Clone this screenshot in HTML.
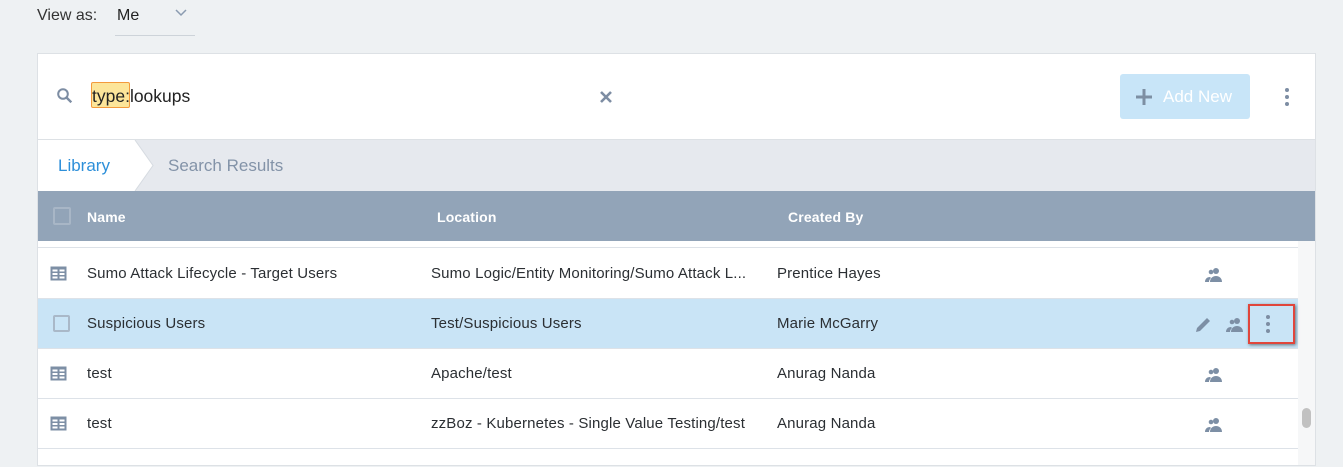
<!DOCTYPE html>
<html><head><meta charset="utf-8">
<style>
*{box-sizing:border-box;margin:0;padding:0}
body{width:1343px;height:467px;background:#eef1f3;font-family:"Liberation Sans",sans-serif;position:relative;overflow:hidden;color:#2b2f33}
.abs{position:absolute}
.t{font-size:15px;white-space:nowrap;letter-spacing:0.15px}
</style></head><body>
<div class="abs" style="left:37px;top:7px;font-size:16px;color:#333">View as:</div>
<div class="abs" style="left:117px;top:7px;font-size:16px;color:#222">Me</div>
<svg class="abs" style="left:175px;top:9px" width="12" height="8"><path d="M1 1l5 5 5-5" stroke="#8a9bb0" stroke-width="1.5" fill="none"/></svg>
<div class="abs" style="left:115px;top:35px;width:80px;height:1px;background:#cdd3d9"></div>

<div class="abs" style="left:37px;top:53px;width:1279px;height:413px;background:#fff;border:1px solid #dde1e5"></div>
<svg class="abs" style="left:56px;top:87px" width="18" height="18"><circle cx="7" cy="7" r="4.8" stroke="#7d8da3" stroke-width="2" fill="none"/><path d="M10.5 10.5l4.8 4.8" stroke="#7d8da3" stroke-width="2.4"/></svg>
<div class="abs" style="left:91px;top:82px;width:39px;height:26px;background:#fce59a;border:1px solid #f39a3c;border-radius:2px"></div>
<div class="abs" style="left:92px;top:86px;font-size:17.5px;color:#222">type:lookups</div>
<svg class="abs" style="left:599px;top:90px" width="14" height="14"><path d="M2 2l10 10M12 2L2 12" stroke="#7d8da3" stroke-width="2.6"/></svg>
<div class="abs" style="left:1120px;top:74px;width:130px;height:45px;background:#c8e5f8;border-radius:3px"></div>
<svg class="abs" style="left:1135px;top:88px" width="18" height="18"><path d="M9 1v16M1 9h16" stroke="#7d8fa3" stroke-width="3"/></svg>
<div class="abs" style="left:1163px;top:87px;font-size:17px;color:#fff">Add New</div>
<svg class="abs" style="left:1283px;top:87px" width="8" height="20"><circle cx="4" cy="3" r="2" fill="#7d8da3"/><circle cx="4" cy="10" r="2" fill="#7d8da3"/><circle cx="4" cy="17" r="2" fill="#7d8da3"/></svg>

<div class="abs" style="left:38px;top:139px;width:1277px;height:52px;background:#e6e9ee;border-top:1px solid #dde1e5"></div>
<svg class="abs" style="left:38px;top:140px" width="120" height="51"><path d="M0 0H97L115 25.5L97 51H0Z" fill="#fff"/><path d="M97 0L115 25.5L97 51" stroke="#d6dbe1" fill="none"/></svg>
<div class="abs" style="left:58px;top:156px;font-size:17px;color:#2d8fd9">Library</div>
<div class="abs" style="left:168px;top:156px;font-size:17px;color:#8393a8">Search Results</div>

<div class="abs" style="left:38px;top:191px;width:1277px;height:50px;background:#92a4b8"></div>
<div class="abs" style="left:53px;top:207px;width:18px;height:18px;border:2px solid #a8b6c6;border-radius:2px"></div>
<div class="abs t" style="left:87px;top:209px;color:#fff;font-weight:bold;font-size:14px">Name</div>
<div class="abs t" style="left:437px;top:209px;color:#fff;font-weight:bold;font-size:14px">Location</div>
<div class="abs t" style="left:788px;top:209px;color:#fff;font-weight:bold;font-size:14px">Created By</div>

<div class="abs" style="left:1298px;top:241px;width:17px;height:224px;background:#f6f7f8"></div>
<div class="abs" style="left:1302px;top:408px;width:9px;height:20px;background:#c1c1c1;border-radius:5px"></div>
<div class="abs" style="left:38px;top:247px;width:1260px;height:1px;background:#dde2e8"></div>

<div class="abs" style="left:38px;top:298px;width:1260px;height:50px;background:#c9e4f6"></div>
<div class="abs" style="left:38px;top:298px;width:1260px;height:1px;background:#dde2e8"></div>
<div class="abs" style="left:38px;top:348px;width:1260px;height:1px;background:#dde2e8"></div>
<div class="abs" style="left:38px;top:398px;width:1260px;height:1px;background:#dde2e8"></div>
<div class="abs" style="left:38px;top:448px;width:1260px;height:1px;background:#dde2e8"></div>

<svg width="0" height="0" style="position:absolute"><defs>
<g id="grid"><rect x="0.5" y="0.5" width="16" height="14" fill="#7d8fa5"/><g fill="#fff"><rect x="2.5" y="3.5" width="5" height="2"/><rect x="9.5" y="3.5" width="5" height="2"/><rect x="2.5" y="7" width="5" height="2"/><rect x="9.5" y="7" width="5" height="2"/><rect x="2.5" y="10.5" width="5" height="2"/><rect x="9.5" y="10.5" width="5" height="2"/></g></g>
<g id="ppl" fill="#7d8fa5"><circle cx="11" cy="4" r="3"/><path d="M5 15c0-4 3-6 6-6s6 2 6 6z"/><circle cx="6" cy="5" r="2.3"/><path d="M0 15c0-3 2-5 5-5l1 1c-1 1-2 2-2 4z"/></g>
</defs></svg>

<svg class="abs" style="left:50px;top:266px" width="18" height="16"><use href="#grid"/></svg>
<div class="abs t" style="left:87px;top:265px">Sumo Attack Lifecycle - Target Users</div>
<div class="abs t" style="left:431px;top:265px">Sumo Logic/Entity Monitoring/Sumo Attack L...</div>
<div class="abs t" style="left:777px;top:265px">Prentice Hayes</div>
<svg class="abs" style="left:1205px;top:267px" width="18" height="16"><use href="#ppl"/></svg>

<div class="abs" style="left:53px;top:315px;width:17px;height:17px;border:2px solid #a9b8c8;border-radius:2px"></div>
<div class="abs t" style="left:87px;top:315px">Suspicious Users</div>
<div class="abs t" style="left:431px;top:315px">Test/Suspicious Users</div>
<div class="abs t" style="left:777px;top:315px">Marie McGarry</div>
<svg class="abs" style="left:1194px;top:316px" width="18" height="18"><path d="M2 16l1-4L13 2l3 3L6 15z" fill="#7d8fa5"/></svg>
<svg class="abs" style="left:1226px;top:317px" width="18" height="16"><use href="#ppl"/></svg>
<div class="abs" style="left:1248px;top:304px;width:47px;height:40px;border:2px solid #e0463c;box-shadow:1px 1px 3px rgba(0,0,0,.5)"></div>
<svg class="abs" style="left:1264px;top:314px" width="8" height="20"><circle cx="4" cy="3" r="2" fill="#7d8da3"/><circle cx="4" cy="10" r="2" fill="#7d8da3"/><circle cx="4" cy="17" r="2" fill="#7d8da3"/></svg>

<svg class="abs" style="left:50px;top:366px" width="18" height="16"><use href="#grid"/></svg>
<div class="abs t" style="left:87px;top:365px">test</div>
<div class="abs t" style="left:431px;top:365px">Apache/test</div>
<div class="abs t" style="left:777px;top:365px">Anurag Nanda</div>
<svg class="abs" style="left:1205px;top:367px" width="18" height="16"><use href="#ppl"/></svg>

<svg class="abs" style="left:50px;top:416px" width="18" height="16"><use href="#grid"/></svg>
<div class="abs t" style="left:87px;top:415px">test</div>
<div class="abs t" style="left:431px;top:415px">zzBoz - Kubernetes - Single Value Testing/test</div>
<div class="abs t" style="left:777px;top:415px">Anurag Nanda</div>
<svg class="abs" style="left:1205px;top:417px" width="18" height="16"><use href="#ppl"/></svg>
</body></html>
